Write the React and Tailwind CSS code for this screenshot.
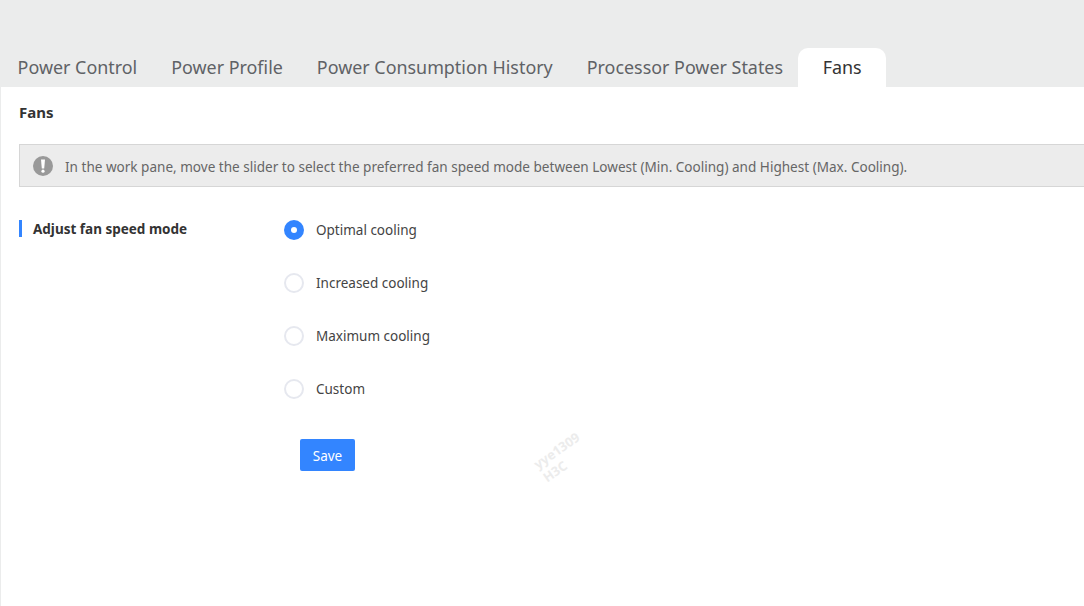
const tabs = ["Power Control", "Power Profile", "Power Consumption History", "Processor Power States"];
const options = ["Optimal cooling", "Increased cooling", "Maximum cooling", "Custom"];
const font = "font-['Noto_Sans','Open_Sans',sans-serif]";

export default function App() {
  return (
    <div className={`h-[606px] w-[1084px] overflow-hidden bg-[#ebecec] ${font}`}>
      {/* tabs */}
      <div className="flex h-[87px] items-end pl-[0.6px]">
        {tabs.map((t) => (
          <div key={t} className="flex h-[39px] items-center px-[17px] text-[17.9px] text-[#5f6266]">
            {t}
          </div>
        ))}
        <div className="ml-[-1.8px] flex h-[39px] w-[88px] items-center justify-center rounded-t-[10px] bg-white text-[17.9px] text-[#333]">
          Fans
        </div>
      </div>

      {/* pane */}
      <div className="relative ml-[1px] h-[519px] bg-white pl-[18px] pt-[15px]">
        <div className="text-[15px] leading-[20px] font-bold text-[#333]">Fans</div>

        <div className="mt-[22px] flex h-[43px] items-center border border-r-0 border-[#d6d6d6] bg-[#ececec] pl-[13px]">
          <svg width="20" height="20" viewBox="0 0 20 20" className="shrink-0">
            <circle cx="10" cy="10" r="10" fill="#999" />
            <path d="M8 3.5h4l-.8 9h-2.4z" fill="#fff" />
            <circle cx="10" cy="15.2" r="1.6" fill="#fff" />
          </svg>
          <span className="ml-[12px] mt-[3px] text-[13.55px] leading-[18px] text-[#666]">
            In the work pane, move the slider to select the preferred fan speed mode between Lowest (Min. Cooling) and Highest (Max. Cooling).
          </span>
        </div>

        <div className="mt-[33px] flex">
          <div className="h-[17px] w-[265px] border-l-[3px] border-[#3385ff] pl-[11px] text-[13.5px] leading-[19px] font-bold text-[#333]">
            Adjust fan speed mode
          </div>
          <div>
            {options.map((o, i) => (
              <div key={o} className="mb-[33px] flex h-[20px] items-center">
                {i === 0 ? (
                  <span className="flex size-[20px] items-center justify-center rounded-full bg-[#3385ff]">
                    <span className="size-[6px] rounded-full bg-white" />
                  </span>
                ) : (
                  <span className="size-[20px] rounded-full border-2 border-[#e6e8ef] bg-white" />
                )}
                <span className="ml-[12px] text-[13.5px] leading-[20px] text-[#444]">{o}</span>
              </div>
            ))}
            <button className="ml-[16px] mt-[7px] h-[32px] w-[55px] rounded-[2px] bg-[#3385ff] pt-[2px] text-[13.5px] text-white">
              Save
            </button>
          </div>
        </div>

        {/* watermark */}
        <div className="absolute left-[534px] top-[354px] -rotate-[35deg] text-[13px] leading-[16px] font-bold text-[#ececec]">
          yye1309
          <br />
          H3C
        </div>
      </div>
    </div>
  );
}
